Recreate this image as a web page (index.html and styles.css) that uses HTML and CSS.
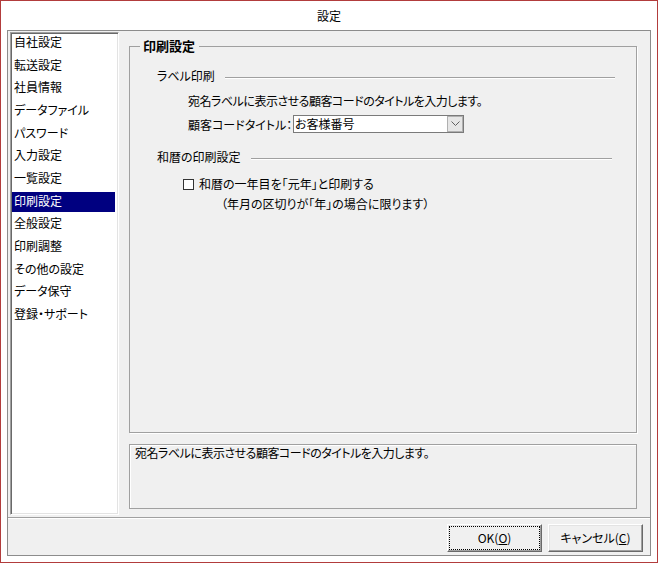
FILE: index.html
```html
<!DOCTYPE html>
<html lang="ja">
<head>
<meta charset="utf-8">
<title>設定</title>
<link rel="stylesheet" href="styles.css">
</head>
<body>
<div class="window">
  <div class="titlebar">設定</div>
  <div class="panel">
    <div class="upper">
      <ul class="menu">
        <li><span>自社設定</span></li>
        <li><span>転送設定</span></li>
        <li><span>社員情報</span></li>
        <li><span>データファイル</span></li>
        <li><span>パスワード</span></li>
        <li><span>入力設定</span></li>
        <li><span>一覧設定</span></li>
        <li class="selected"><span>印刷設定</span></li>
        <li><span>全般設定</span></li>
        <li><span>印刷調整</span></li>
        <li><span>その他の設定</span></li>
        <li><span>データ保守</span></li>
        <li><span>登録・サポート</span></li>
      </ul>
      <div class="right">
        <fieldset class="group">
          <legend>印刷設定</legend>
          <div class="section-head sec1"><span>ラベル印刷</span><i class="rule"></i></div>
          <p class="desc-line">宛名ラベルに表示させる顧客コードのタイトルを入力します。</p>
          <div class="combo-row">
            <label class="combo-label">顧客コードタイトル：</label>
            <div class="combo">
              <span class="combo-text">お客様番号</span>
              <span class="combo-btn"><svg width="9" height="6" viewBox="0 0 9 6"><polyline points="0.5,0.5 4.5,4.5 8.5,0.5" fill="none" stroke="#606060" stroke-width="1"/></svg></span>
            </div>
          </div>
          <div class="section-head sec2"><span>和暦の印刷設定</span><i class="rule"></i></div>
          <div class="check-row"><span class="checkbox"></span><span>和暦の一年目を「元年」と印刷する</span></div>
          <p class="note">（年月の区切りが「年」の場合に限ります）</p>
        </fieldset>
        <div class="helpbox">宛名ラベルに表示させる顧客コードのタイトルを入力します。</div>
      </div>
    </div>
    <div class="buttons">
      <button class="btn default">OK(<u>O</u>)</button>
      <button class="btn">キャンセル(<u>C</u>)</button>
    </div>
  </div>
</div>
</body>
</html>
```
FILE: styles.css
```css
html, body {
  margin: 0;
  padding: 0;
}
body {
  font-family: "Noto Sans CJK JP", "Noto Sans", sans-serif;
  font-size: 12px;
  color: #000;
  font-feature-settings: "palt";
}
.window {
  width: 658px;
  height: 563px;
  box-sizing: border-box;
  border: 1px solid #b23c3c;
  background: #fff;
  display: flex;
  flex-direction: column;
}
.titlebar {
  height: 29px;
  line-height: 29px;
  text-align: center;
  font-size: 12px;
}
.panel {
  flex: 1;
  margin: 0 6px 6px 6px;
  border: 1px solid #8c8c8c;
  background: #f0f0f0;
  display: flex;
  flex-direction: column;
}
.upper {
  height: 486px;
  display: flex;
}
.menu {
  list-style: none;
  margin: 1px 0 0 2px;
  padding: 0;
  width: 109px;
  height: 483px;
  box-sizing: border-box;
  background: #fff;
  border: 1px solid;
  border-color: #a0a0a0 #fff #fff #a0a0a0;
  box-shadow: inset 1px 1px 0 #696969, inset -1px -1px 0 #e3e3e3;
}
.menu li {
  height: 22.67px;
}
.menu li span {
  display: block;
  height: 20px;
  line-height: 17px;
  padding-left: 2px;
  margin-left: 1px;
  margin-right: 3px;
  white-space: nowrap;
}
.menu li.selected span {
  background: #000080;
  color: #fff;
}
.right {
  margin-left: 10px;
  width: 508px;
  padding-top: 8px;
  display: flex;
  flex-direction: column;
}
.group {
  margin: 0;
  padding: 0;
  height: 394px;
  box-sizing: border-box;
  border: 1px solid #a0a0a0;
  box-shadow: 1px 1px 0 #fff;
}
.group legend {
  font-size: 13px;
  font-weight: bold;
  line-height: 14px;
  padding: 0 4px 0 3px;
  margin-left: 10px;
}
.section-head {
  display: flex;
  height: 14px;
  line-height: 14px;
  padding-left: 27px;
}
.section-head .rule {
  flex: 1;
  height: 0;
  margin-top: 8px;
  margin-left: 10px;
  border-top: 1px solid #a0a0a0;
  border-bottom: 1px solid #fff;
}
.sec1 {
  margin-top: 16px;
  margin-right: 21px;
}
.sec2 {
  margin-top: 17px;
  margin-right: 24px;
}
.desc-line {
  margin: 11px 0 0 0;
  padding-left: 58px;
  line-height: 14px;
  letter-spacing: -0.5px;
}
.combo-row {
  margin-top: 7px;
  height: 18px;
  display: flex;
  align-items: center;
  padding-left: 58px;
}
.combo-label {
  width: 105px;
  white-space: nowrap;
}
.combo {
  width: 171px;
  height: 18px;
  box-sizing: border-box;
  border: 1px solid #7a7a7a;
  background: #fff;
  display: flex;
}
.combo-text {
  padding-left: 1px;
  line-height: 16px;
}
.combo-btn {
  margin-left: auto;
  width: 16px;
  height: 16px;
  box-sizing: border-box;
  border: 1px solid #b0b0b0;
  background: #e6e6e6;
  display: flex;
  align-items: center;
  justify-content: center;
}
.check-row {
  margin-top: 10px;
  padding-left: 53px;
  height: 20px;
  line-height: 20px;
  display: flex;
  align-items: center;
}
.checkbox {
  width: 11px;
  height: 11px;
  box-sizing: border-box;
  border: 1px solid #333;
  background: #fff;
  margin-right: 5px;
}
.note {
  margin: 0;
  padding-left: 91px;
  line-height: 20px;
}
.helpbox {
  margin-top: 11px;
  height: 65px;
  box-sizing: border-box;
  border: 1px solid #a0a0a0;
  box-shadow: inset 1px 1px 0 #fff;
  padding: 1px 5px;
  line-height: 14px;
  letter-spacing: -0.5px;
}
.buttons {
  flex: 1;
  border-top: 1px solid #a0a0a0;
  box-shadow: inset 0 1px 0 #fff;
  display: flex;
  justify-content: flex-end;
  align-items: flex-start;
  padding: 6px 7px 0 0;
  gap: 6px;
}
.btn {
  width: 95px;
  height: 28px;
  box-sizing: border-box;
  font: inherit;
  color: #000;
  background: #f0f0f0;
  border: 1px solid;
  border-color: #fff #696969 #696969 #fff;
  box-shadow: inset -1px -1px 0 #a0a0a0, inset 1px 1px 0 #e3e3e3;
  padding: 0;
  line-height: 24px;
}
.btn u {
  text-underline-offset: 1px;
}
.btn.default {
  outline: 1px dotted #000;
  outline-offset: -3px;
}
```
